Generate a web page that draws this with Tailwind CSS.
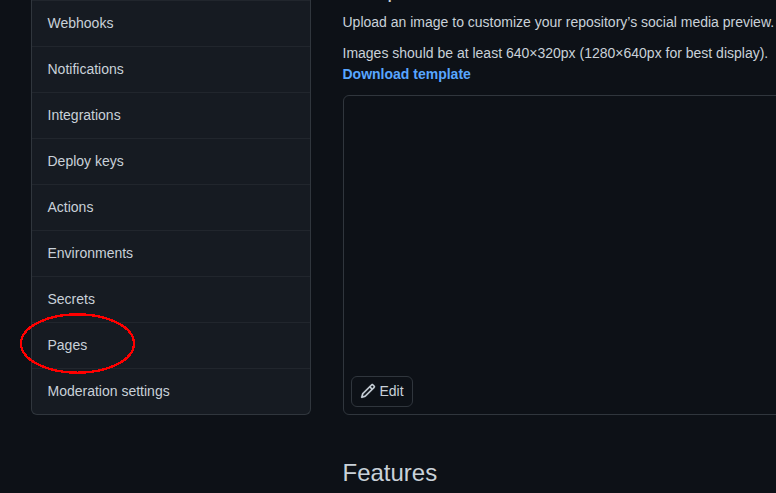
<!DOCTYPE html>
<html lang="en">
<head>
<meta charset="utf-8">
<title>Settings</title>
<script src="https://cdn.jsdelivr.net/npm/@tailwindcss/browser@4"></script>
</head>
<body class="bg-[#0d1117] text-[#c9d1d9] font-['Liberation_Sans',Arial,sans-serif] text-sm leading-[21px] overflow-hidden">
<div class="relative flex h-[493px] w-[776px] gap-8 overflow-hidden pl-[30.5px]">
  <nav class="flex h-[415px] w-[280px] shrink-0 flex-col rounded-b-md border-x border-b border-[#30363d] bg-[#161b22]">
    <div class="h-px shrink-0 bg-[#21262d]"></div>
    <a class="h-[46px] shrink-0 border-b border-[#21262d] px-4 py-3">Webhooks</a>
    <a class="h-[46px] shrink-0 border-b border-[#21262d] px-4 py-3">Notifications</a>
    <a class="h-[46px] shrink-0 border-b border-[#21262d] px-4 py-3">Integrations</a>
    <a class="h-[46px] shrink-0 border-b border-[#21262d] px-4 py-3">Deploy keys</a>
    <a class="h-[46px] shrink-0 border-b border-[#21262d] px-4 py-3">Actions</a>
    <a class="h-[46px] shrink-0 border-b border-[#21262d] px-4 py-3">Environments</a>
    <a class="h-[46px] shrink-0 border-b border-[#21262d] px-4 py-3">Secrets</a>
    <a class="h-[46px] shrink-0 border-b border-[#21262d] px-4 py-3">Pages</a>
    <a class="h-[45px] shrink-0 px-4 py-3">Moderation settings</a>
  </nav>
  <main class="-mt-4 w-[640px] shrink-0">
    <h3 class="mb-[7px] font-bold">Social preview</h3>
    <p class="mb-[10px] whitespace-nowrap">Upload an image to customize your repository’s social media preview.</p>
    <p class="whitespace-nowrap">Images should be at least 640×320px (1280×640px for best display).<br><a class="font-bold text-[#58a6ff]">Download template</a></p>
    <div class="mt-[10px] flex h-[320px] items-end rounded-md border border-[#30363d] p-[7px]">
      <button class="flex h-[31px] w-[62px] items-center gap-1 rounded-md border border-[#30363d] pl-[8px]">
        <svg class="relative -top-px size-4 shrink-0" viewBox="0 0 16 16" fill="currentColor" stroke="currentColor" stroke-width="0.2"><path fill-rule="evenodd" d="M11.013 1.427a1.75 1.75 0 012.474 0l1.086 1.086a1.75 1.75 0 010 2.474l-8.61 8.61c-.21.21-.47.364-.756.445l-3.251.93a.75.75 0 01-.927-.928l.929-3.25a1.75 1.75 0 01.445-.758l8.61-8.61zm1.414 1.06a.25.25 0 00-.354 0L10.811 3.75l1.439 1.44 1.263-1.263a.25.25 0 000-.354l-1.086-1.086zM11.189 6.25L9.75 4.81l-6.286 6.287a.25.25 0 00-.064.108l-.558 1.953 1.953-.558a.249.249 0 00.108-.064l6.286-6.286z"/></svg>
        <span>Edit</span>
      </button>
    </div>
    <h2 class="mt-10 text-2xl leading-9">Features</h2>
  </main>
  <svg class="absolute left-[18px] top-[311px] h-[66px] w-[120px]" viewBox="0 0 120 66" fill="none" shape-rendering="crispEdges"><ellipse cx="59.5" cy="32.5" rx="56.5" ry="29.2" stroke="#ff0000" stroke-width="2.4"/></svg>
</div>
</body>
</html>
